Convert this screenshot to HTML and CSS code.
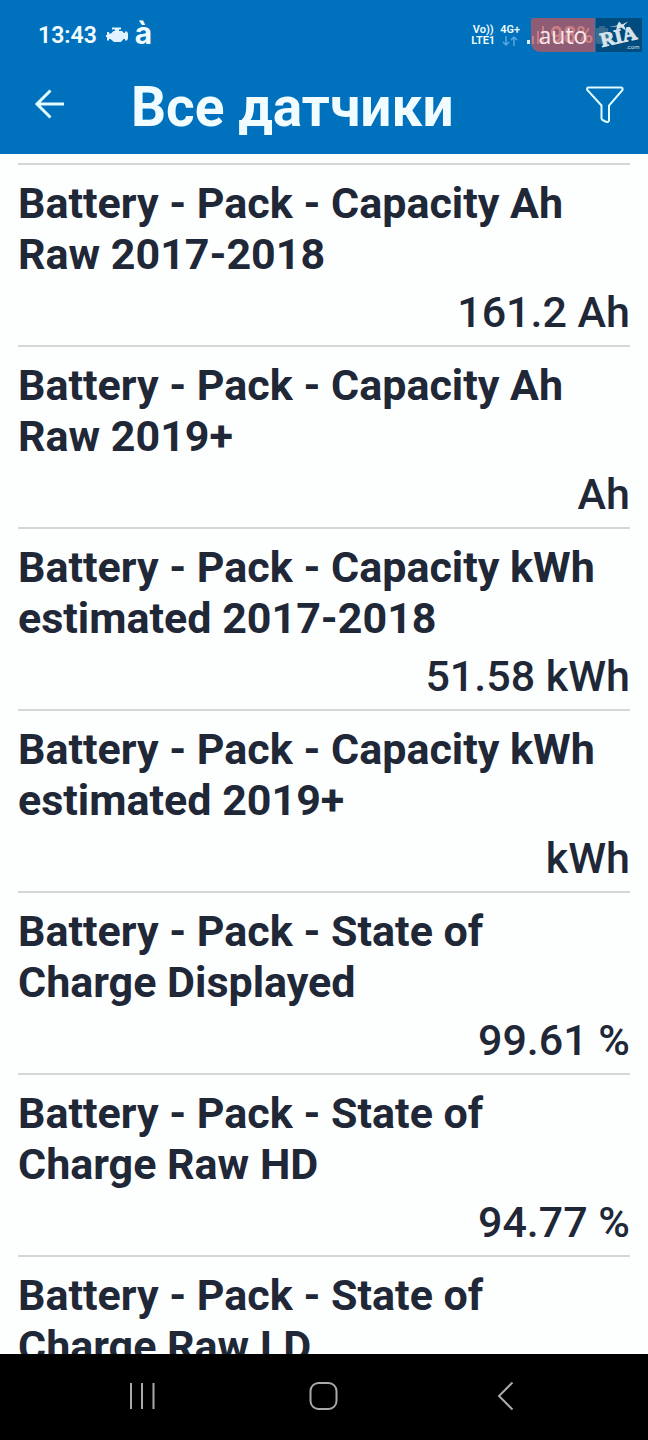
FILE: index.html
```html
<!DOCTYPE html>
<html lang="ru">
<head>
<meta charset="utf-8">
<meta name="viewport" content="width=device-width, initial-scale=1">
<title>Все датчики</title>
<link rel="stylesheet" href="styles.css">
</head>
<body>
<header class="top">
  <div class="status">
    <span class="clock">13:43</span>
    <svg class="engine" width="24" height="18" viewBox="0 0 24 18" aria-hidden="true"><path d="M7 1.500h9v2h-2V5h3l2 2h1V5.500h2l1 2v5l-1 2h-2V13h-1.500L16 16H9l-3.500-3H4v1.500H2V11H1V9h1V6h2v1.500h2L8.500 5H10V3.500H7z"/></svg>
    <span class="app-mark">à</span>
    <span class="network"><span>Vo))</span><span>LTE1</span></span>
    <span class="network"><span>4G+</span>
      <svg class="arrows" width="16" height="12" viewBox="0 0 16 12" aria-hidden="true"><path d="M4 1v9M1 7l3 3 3-3M12 11V2M9 5l3-3 3 3"/></svg>
    </span>
    <span class="battery">
      <svg class="signal" width="20" height="20" viewBox="0 0 20 20" aria-hidden="true"><path d="M1 15h3v4H1zM6 11h2v8H6zM11 6h2v13h-2zM16 1h2v18h-2z"/></svg>
      <span class="percent">98%</span>
      <svg class="cell" width="14" height="20" viewBox="0 0 14 20" aria-hidden="true"><path d="M4 1h6v2h3v15l-2 1H3l-2-1V3h3z"/></svg>
      <span class="watermark">
        <span class="wm-auto">auto</span>
        <svg class="wm-ria" viewBox="0 0 46 34" aria-label="RIA.com">
          <path class="wm-star" d="M13 9l8-1.500 2-4 3 3 6-3-4 4 2 5-5-3-5 3 1-4z"/>
          <text class="wm-name" x="6" y="29" transform="rotate(-13 6 29)">RIA</text>
          <text class="wm-com" x="30" y="31">.com</text>
        </svg>
      </span>
    </span>
  </div>
  <div class="bar">
    <button class="icon-button" type="button" aria-label="Назад">
      <svg width="40" height="40" viewBox="0 0 40 40" aria-hidden="true"><path class="back" d="M36 20H9M22.500 6.500L9 20l13.500 13.500"/></svg>
    </button>
    <h1 class="title">Все датчики</h1>
    <button class="icon-button" type="button" aria-label="Фильтр">
      <svg width="40" height="40" viewBox="0 0 40 40" aria-hidden="true"><path class="funnel" d="M3.500 3.500H36Q38 3.500 37.500 6L24 21.500V36.500Q23.500 38.500 21.500 38L17.500 36Q16.500 35.500 16.500 34V21.500L2.300 6Q1.500 3.500 3.500 3.500Z"/></svg>
    </button>
  </div>
</header>
<main class="content">
  <dl class="sensors">
    <div class="sensor"><dt class="name">Battery - Pack - Capacity Ah Raw 2017-2018</dt><dd class="value">161.2 Ah</dd></div>
    <div class="sensor"><dt class="name">Battery - Pack - Capacity Ah Raw 2019+</dt><dd class="value">Ah</dd></div>
    <div class="sensor"><dt class="name">Battery - Pack - Capacity kWh estimated 2017-2018</dt><dd class="value">51.58 kWh</dd></div>
    <div class="sensor"><dt class="name">Battery - Pack - Capacity kWh estimated 2019+</dt><dd class="value">kWh</dd></div>
    <div class="sensor"><dt class="name">Battery - Pack - State of Charge Displayed</dt><dd class="value">99.61 %</dd></div>
    <div class="sensor"><dt class="name">Battery - Pack - State of Charge Raw HD</dt><dd class="value">94.77 %</dd></div>
    <div class="sensor"><dt class="name">Battery - Pack - State of Charge Raw LD</dt></div>
  </dl>
</main>
<nav class="system-nav" aria-label="Система">
  <button class="nav-button" type="button" aria-label="Недавние"><svg width="30" height="30" viewBox="0 0 30 30" aria-hidden="true"><path d="M3 2v26M14 2v26M25.500 2v26"/></svg></button>
  <button class="nav-button" type="button" aria-label="Домой"><svg width="30" height="30" viewBox="0 0 30 30" aria-hidden="true"><rect x="1.500" y="2" width="26" height="26" rx="8"/></svg></button>
  <button class="nav-button" type="button" aria-label="Назад"><svg width="30" height="30" viewBox="0 0 30 30" aria-hidden="true"><path d="M22.500 1.500L9 15l13.500 13.500"/></svg></button>
</nav>
</body>
</html>
```
FILE: styles.css
```css
* {
  box-sizing: border-box;
}

body {
  margin: 0;
  height: 100vh;
  display: flex;
  flex-direction: column;
  background: #fdfefe;
  color: #202737;
  font-family: Roboto, "Liberation Sans", sans-serif;
}

button {
  border: 0;
  padding: 0;
  background: none;
  display: flex;
  align-items: center;
  justify-content: center;
}

svg {
  display: block;
  flex: none;
}

.top {
  flex: none;
  background: #0071bc;
  color: #f0fcff;
}

.status {
  display: flex;
  align-items: center;
  height: 70px;
  padding: 0 6px 0 38px;
}

.clock {
  font-size: 23px;
  font-weight: 600;
}

.engine {
  margin-left: 8px;
  fill: #e2f2ff;
}

.app-mark {
  margin: 0 auto 4px 6px;
  font-family: Inter, sans-serif;
  font-size: 30px;
  font-weight: 700;
  line-height: 34px;
}

.network {
  display: flex;
  flex-direction: column;
  align-items: center;
  margin-left: 5px;
  font-size: 11px;
  font-weight: 600;
  line-height: 11px;
}

.arrows {
  fill: none;
  stroke: #57a8e0;
  stroke-width: 1.500;
}

.battery {
  position: relative;
  display: flex;
  align-items: center;
  width: 116px;
  height: 34px;
  margin-left: 6px;
}

.signal,
.cell {
  fill: #d9efff;
}

.percent {
  margin: 0 2px 0 4px;
  font-size: 23px;
  font-weight: 600;
}

.watermark {
  position: absolute;
  inset: 0 0 0 5px;
  display: flex;
  gap: 1px;
}

.wm-auto {
  flex: 1;
  border-radius: 3px 0 0 9px;
  background: rgb(190 86 92 / 75%);
  color: #fbe6e8;
  font-family: "Open Sans", sans-serif;
  font-size: 23px;
  font-weight: 500;
  line-height: 34px;
  text-align: center;
}

.wm-ria {
  width: 46px;
  height: 34px;
  background: rgb(0 64 106 / 75%);
  fill: #d5e3ea;
}

.wm-name {
  font-family: "Liberation Serif", serif;
  font-size: 20px;
  font-weight: 700;
  stroke: #d5e3ea;
}

.wm-com {
  font-size: 6px;
}

.bar {
  display: flex;
  align-items: center;
  height: 84px;
  padding: 0 23px 16px 28px;
}

.icon-button {
  width: 40px;
  height: 40px;
  color: inherit;
}

.back,
.funnel {
  fill: none;
  stroke: #e0fcff;
}

.back {
  stroke-width: 3;
}

.funnel {
  stroke-width: 2;
}

.title {
  flex: 1;
  margin: 5px 0 0 63px;
  font-size: 55px;
  font-weight: 700;
  line-height: 64px;
}

.content {
  flex: 1;
  min-height: 0;
  overflow: hidden;
  padding: 9px 18px 0;
}

.sensors {
  margin: 0;
}

.sensor {
  border-top: 2px solid #d5d6d9;
  padding: 13px 0 7px;
}

.name {
  font-size: 43px;
  font-weight: 700;
  line-height: 51px;
}

.value {
  margin: 7px 0 0;
  font-size: 43px;
  font-weight: 500;
  line-height: 51px;
  text-align: right;
}

.system-nav {
  flex: none;
  display: flex;
  justify-content: center;
  align-items: center;
  gap: 151px;
  height: 86px;
  padding-bottom: 2px;
  background: #000;
}

.nav-button {
  width: 30px;
  height: 30px;
}

.nav-button svg {
  fill: none;
  stroke: #aaa;
  stroke-width: 2;
}
```
